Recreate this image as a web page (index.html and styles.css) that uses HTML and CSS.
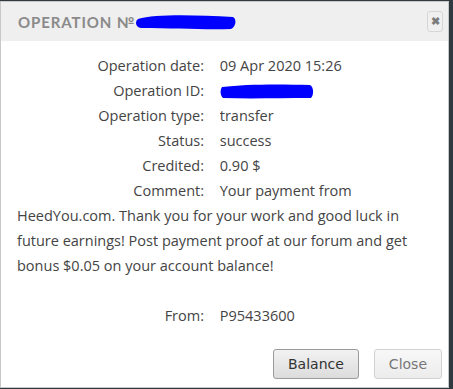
FILE: index.html
```html
<!DOCTYPE html>
<html lang="en">
<head>
  <meta charset="UTF-8" />
  <title>Operation</title>
  <link rel="stylesheet" href="styles.css">
</head>
<body>
  <!-- Operation dialog -->
  <div class="dialog">
    <div class="dialog-header">
      <span class="dialog-title">Operation №</span>
      <svg class="scribble title-scribble" width="102" height="18" viewBox="0 0 102 18">
        <path d="M3 6 C20 1 60 2 98 4 C102 6 101 14 96 16 C70 17 40 15 6 15 C0 14 0 8 3 6 Z" fill="#0000ff"/>
      </svg>
      <button class="dialog-close" type="button">&#x2716;</button>
    </div>

    <div class="dialog-body">
      <div class="info">
        <span class="label">Operation date:</span> 09 Apr 2020 15:26<br>
        <span class="label">Operation ID:</span>
        <svg class="scribble id-scribble" width="94" height="16" viewBox="0 0 94 16">
          <path d="M2 4 C25 1 60 1 90 2 C94 4 94 12 91 15 C60 15 30 16 3 15 C0 12 0 7 2 4 Z" fill="#0000ff"/>
        </svg><br>
        <span class="label">Operation type:</span> transfer<br>
        <span class="label">Status:</span> success<br>
        <span class="label">Credited:</span> 0.90 $<br>
        <span class="label">Comment:</span> Your payment from HeedYou.com. Thank you for your work and good luck in future earnings! Post payment proof at our forum and get bonus $0.05 on your account balance!<br>
        <br>
        <span class="label">From:</span> P95433600
      </div>
    </div>

    <div class="dialog-buttons">
      <button class="btn btn-primary" type="button">Balance</button>
      <button class="btn btn-light" type="button">Close</button>
    </div>
  </div>
</body>
</html>
```

FILE: styles.css
```css
/* =============== PAGE =============== */
html,
body {
  margin: 0;
  padding: 0;
  background: #2e3a40;
}

/* =============== DIALOG =============== */
.dialog {
  margin-top: 1px;
  width: 447px;
  height: 385px;
  background: #fff;
  border: 1px solid #c8c8c8;
  display: flex;
  flex-direction: column;
  font-family: "Open Sans", sans-serif;
  color: #444;
}

.dialog-header {
  height: 39px;
  background: #efefef;
  display: flex;
  align-items: center;
  padding: 0 5px 0 17px;
}
.dialog-title {
  font-family: "Lato", sans-serif;
  font-size: 15px;
  font-weight: 700;
  letter-spacing: 0.9px;
  text-transform: uppercase;
  color: #8a8a8a;
}
.dialog-close {
  margin-left: auto;
  width: 16px;
  height: 21px;
  padding: 0;
  border: 1px solid #d6d6d6;
  border-radius: 3px;
  background: #f0f0f0;
  color: #7d7d7d;
  font-size: 11px;
  font-weight: 700;
  line-height: 19px;
  text-align: center;
}

/* =============== BODY =============== */
.dialog-body {
  padding: 12px 15px 0 16px;
  flex: 1;
}
.info {
  font-size: 14.5px;
  line-height: 25px;
  color: #444;
}
.label {
  display: inline-block;
  width: 187px;
  text-align: right;
  margin-right: 12px;
}
.id-scribble {
  vertical-align: -3px;
}

/* =============== BUTTONS =============== */
.dialog-buttons {
  display: flex;
  justify-content: flex-end;
  gap: 15px;
  padding: 0 6px 8px 0;
}
.btn {
  height: 30px;
  padding: 0 14px;
  font-family: "DejaVu Sans", sans-serif;
  font-size: 14px;
  border-radius: 3px;
  cursor: pointer;
}
.btn-primary {
  border: 1px solid #9a9a9a;
  background: linear-gradient(#f2f2f2, #dcdcdc);
  color: #333;
}
.btn-light {
  border: 1px solid #d2d2d2;
  background: linear-gradient(#f8f8f8, #ececec);
  color: #777;
}
```
